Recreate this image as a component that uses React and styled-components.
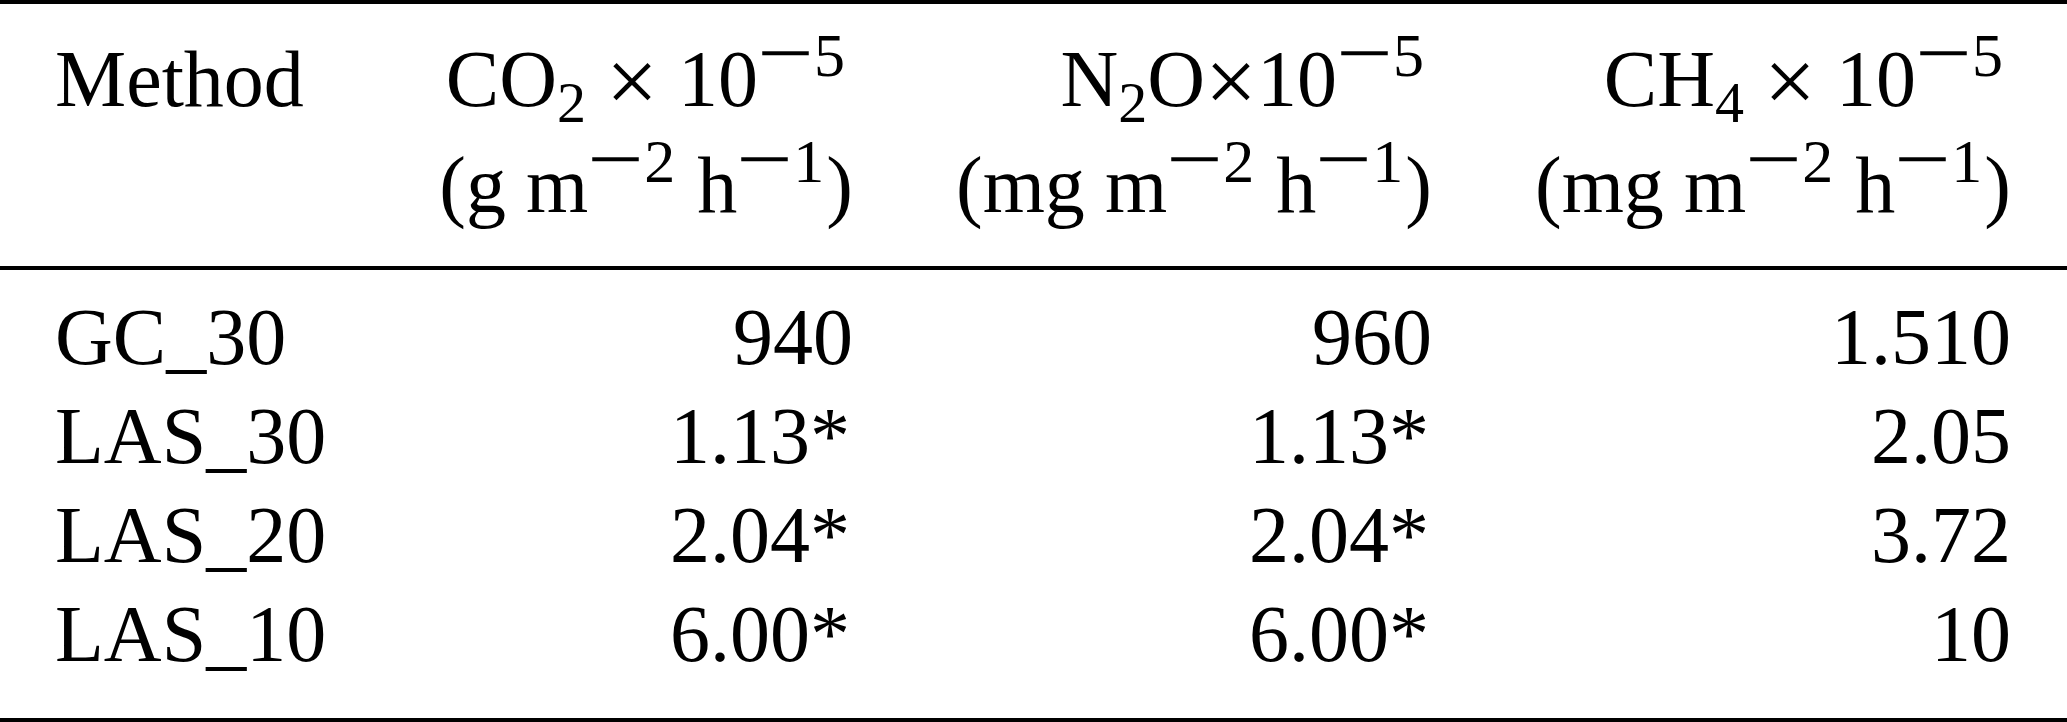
import React from 'react';
import styled, { createGlobalStyle } from 'styled-components';

const GlobalStyle = createGlobalStyle`
  html, body {
    margin: 0;
    padding: 0;
    background: #fff;
  }
  body {
    font-family: "Liberation Serif", "Times New Roman", serif;
    color: #000;
  }
`;

const Table = styled.div`
  width: 2067px;
  display: flex;
  flex-direction: column;
  font-size: 80px;
`;

const Rule = styled.div`
  height: 4px;
  background: #000;
`;

const Grid = styled.div`
  display: grid;
  grid-template-columns: 400px 453px 579px 579px;
  padding-right: 56px;
`;

const HeaderRow = styled(Grid)`
  padding-top: 22px;
  padding-bottom: 28px;
  line-height: 106px;
`;

const Body = styled.div`
  display: flex;
  flex-direction: column;
  padding-top: 18px;
  padding-bottom: 34px;
`;

const BodyRow = styled(Grid)`
  line-height: 99px;
`;

const Cell = styled.div`
  text-align: ${(p) => (p.left ? 'left' : 'right')};
  padding-left: ${(p) => (p.left ? '55px' : '0')};
  white-space: nowrap;
`;

const HeadCell = styled.div`
  display: flex;
  flex-direction: column;
  align-items: flex-end;
  white-space: nowrap;
`;

const HeadLine = styled.div`
  padding-right: ${(p) => p.trail || 0}px;
`;

const Sub = styled.span`
  font-size: 58px;
  line-height: 0;
  vertical-align: -16px;
`;

const Sup = styled.span`
  font-size: 62px;
  line-height: 0;
  vertical-align: 30px;
  margin-right: 2px;
`;

const Minus = styled.span`
  display: inline-block;
  font-size: 80px;
  line-height: 0;
  vertical-align: -4px;
  transform: scaleX(1.25);
  margin: 0 6px 0 5px;
`;

const Times = styled.span`
  font-size: 92px;
  line-height: 0;
  vertical-align: -6px;
`;

const Star = styled.span`
  margin-right: 3px;
`;

const Power = ({ n }) => (
  <Sup>
    <Minus>−</Minus>
    {n}
  </Sup>
);

const Units = ({ mass }) => (
  <HeadLine>
    ({mass} m<Power n="2" /> h<Power n="1" />)
  </HeadLine>
);

const rows = [
  ['GC_30', '940', '960', '1.510'],
  ['LAS_30', '1.13*', '1.13*', '2.05'],
  ['LAS_20', '2.04*', '2.04*', '3.72'],
  ['LAS_10', '6.00*', '6.00*', '10'],
];

const Value = ({ v }) =>
  v.endsWith('*') ? (
    <>
      {v.slice(0, -1)}
      <Star>*</Star>
    </>
  ) : (
    v
  );

const App = () => (
  <>
    <GlobalStyle />
    <Table>
      <Rule />
      <HeaderRow>
        <Cell left>Method</Cell>
        <HeadCell>
          <HeadLine trail={6}>
            CO<Sub>2</Sub> <Times>×</Times> 10<Power n="5" />
          </HeadLine>
          <Units mass="g" />
        </HeadCell>
        <HeadCell>
          <HeadLine trail={6}>
            N<Sub>2</Sub>O<Times>×</Times>10<Power n="5" />
          </HeadLine>
          <Units mass="mg" />
        </HeadCell>
        <HeadCell>
          <HeadLine trail={6}>
            CH<Sub>4</Sub> <Times>×</Times> 10<Power n="5" />
          </HeadLine>
          <Units mass="mg" />
        </HeadCell>
      </HeaderRow>
      <Rule />
      <Body>
        {rows.map((r) => (
          <BodyRow key={r[0]}>
            <Cell left>{r[0]}</Cell>
            <Cell><Value v={r[1]} /></Cell>
            <Cell><Value v={r[2]} /></Cell>
            <Cell><Value v={r[3]} /></Cell>
          </BodyRow>
        ))}
      </Body>
      <Rule />
    </Table>
  </>
);

export default App;
